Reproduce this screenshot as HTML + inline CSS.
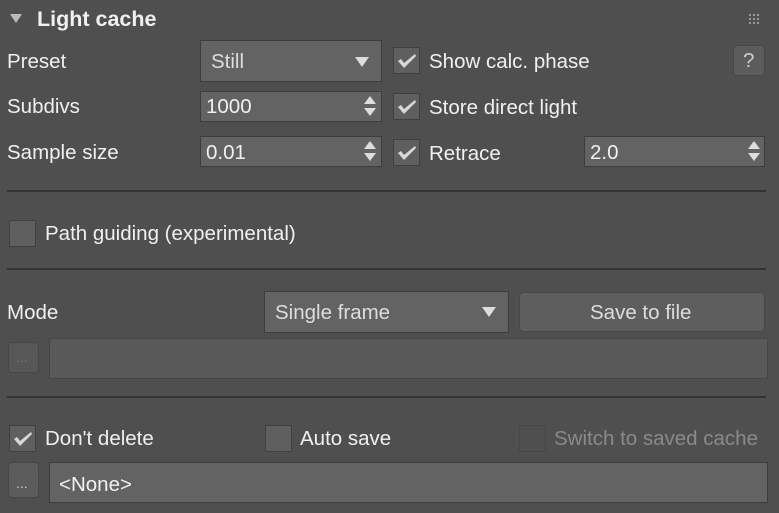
<!DOCTYPE html>
<html><head><style>
body{margin:0;width:779px;height:513px;background:#4f4f4f;position:relative;overflow:hidden;font-family:"Liberation Sans",sans-serif;color:#f0f0f0;font-size:20.5px}
.a{position:absolute}
.f{position:absolute;background:#636363;border:1px solid #3c3c3c;box-sizing:border-box}
.t{position:absolute;line-height:1;white-space:nowrap}
.cb{position:absolute;width:27px;height:27px;background:#5f5f5f;border:1px solid #3f3f3f;box-sizing:border-box}
.sep{position:absolute;left:7px;width:759px;height:2px;background:#333}
.btn{position:absolute;background:#5c5c5c;border-radius:4px;border:1px solid #474747;box-sizing:border-box}
.dd{position:absolute;width:0;height:0;border-left:7px solid transparent;border-right:7px solid transparent;border-top:10px solid #ddd}
.sp{position:absolute;width:0;height:0;border-left:6px solid transparent;border-right:6px solid transparent}
</style></head><body>
<div class="dd" style="left:10px;top:14px;border-left-width:6px;border-right-width:6px;border-top-width:9px;border-top-color:#bbb"></div>
<div class="t" style="left:37px;top:9px;font-weight:bold;font-size:21.5px">Light cache</div>
<svg class="a" style="left:749px;top:14px" width="12" height="10"><g fill="#999"><rect x="0" y="0" width="2" height="2"/><rect x="4" y="0" width="2" height="2"/><rect x="8" y="0" width="2" height="2"/><rect x="0" y="4" width="2" height="2"/><rect x="4" y="4" width="2" height="2"/><rect x="8" y="4" width="2" height="2"/><rect x="0" y="8" width="2" height="2"/><rect x="4" y="8" width="2" height="2"/><rect x="8" y="8" width="2" height="2"/></g></svg>

<div class="t" style="left:7px;top:52px">Preset</div>
<div class="f" style="left:200px;top:40px;width:182px;height:42px"></div>
<div class="t" style="left:211px;top:52px;color:#ddd">Still</div>
<div class="dd" style="left:355px;top:57px"></div>

<div class="t" style="left:7px;top:97px">Subdivs</div>
<div class="f" style="left:200px;top:91px;width:182px;height:31px"></div>
<div class="t" style="left:206px;top:97px">1000</div>

<div class="t" style="left:7px;top:143px">Sample size</div>
<div class="f" style="left:200px;top:136px;width:182px;height:31px"></div>
<div class="t" style="left:206px;top:143px">0.01</div>

<div class="f" style="left:584px;top:136px;width:181px;height:31px"></div>
<div class="t" style="left:590px;top:143px">2.0</div>

<div class="sp" style="left:364px;top:96px;border-bottom:8px solid #ddd"></div>
<div class="sp" style="left:364px;top:108px;border-top:8px solid #ddd"></div>
<div class="sp" style="left:364px;top:141px;border-bottom:8px solid #ddd"></div>
<div class="sp" style="left:364px;top:153px;border-top:8px solid #ddd"></div>
<div class="sp" style="left:748px;top:141px;border-bottom:8px solid #ddd"></div>
<div class="sp" style="left:748px;top:153px;border-top:8px solid #ddd"></div>

<div class="cb" style="left:393px;top:47px"></div>
<div class="cb" style="left:393px;top:93px"></div>
<div class="cb" style="left:393px;top:139px"></div>
<div class="cb" style="left:9px;top:220px"></div>
<div class="cb" style="left:9px;top:425px"></div>
<div class="cb" style="left:265px;top:425px"></div>
<div class="cb" style="left:519px;top:425px;border-color:#474747;background:#4f4f4f"></div>
<svg class="a" style="left:393px;top:47px" width="27" height="27"><path d="M5 14 L8 12 L11 16 L22 7 L23 9 L11 21 Z" fill="#d8d8d8"/></svg>
<svg class="a" style="left:393px;top:93px" width="27" height="27"><path d="M5 14 L8 12 L11 16 L22 7 L23 9 L11 21 Z" fill="#d8d8d8"/></svg>
<svg class="a" style="left:393px;top:139px" width="27" height="27"><path d="M5 14 L8 12 L11 16 L22 7 L23 9 L11 21 Z" fill="#d8d8d8"/></svg>
<svg class="a" style="left:9px;top:425px" width="27" height="27"><path d="M5 14 L8 12 L11 16 L22 7 L23 9 L11 21 Z" fill="#d8d8d8"/></svg>

<div class="t" style="left:429px;top:52px">Show calc. phase</div>
<div class="t" style="left:429px;top:98px">Store direct light</div>
<div class="t" style="left:429px;top:144px">Retrace</div>
<div class="btn" style="left:733px;top:45px;width:32px;height:31px"></div>
<div class="t" style="left:743px;top:51px;color:#ccc">?</div>

<div class="sep" style="top:190px"></div>
<div class="t" style="left:45px;top:224px">Path guiding (experimental)</div>
<div class="sep" style="top:268px"></div>

<div class="t" style="left:7px;top:303px">Mode</div>
<div class="f" style="left:264px;top:291px;width:245px;height:42px"></div>
<div class="t" style="left:275px;top:303px;color:#ddd">Single frame</div>
<div class="dd" style="left:482px;top:307px"></div>
<div class="btn" style="left:519px;top:292px;width:246px;height:40px;background:#5e5e5e"></div>
<div class="t" style="left:590px;top:303px;color:#ddd">Save to file</div>

<div class="btn" style="left:8px;top:342px;width:31px;height:31px;background:#575757"></div>
<div class="t" style="left:16px;top:350px;color:#777;font-size:14px">...</div>
<div class="f" style="left:49px;top:338px;width:719px;height:41px;background:#595959;border-color:#464646"></div>

<div class="sep" style="top:396px"></div>

<div class="t" style="left:45px;top:429px">Don't delete</div>
<div class="t" style="left:300px;top:429px">Auto save</div>
<div class="t" style="left:554px;top:429px;color:#8a8a8a">Switch to saved cache</div>

<div class="btn" style="left:8px;top:462px;width:31px;height:36px"></div>
<div class="t" style="left:16px;top:476px;color:#ccc;font-size:14px">...</div>
<div class="f" style="left:49px;top:462px;width:719px;height:41px"></div>
<div class="t" style="left:59px;top:475px">&lt;None&gt;</div>
</body></html>
